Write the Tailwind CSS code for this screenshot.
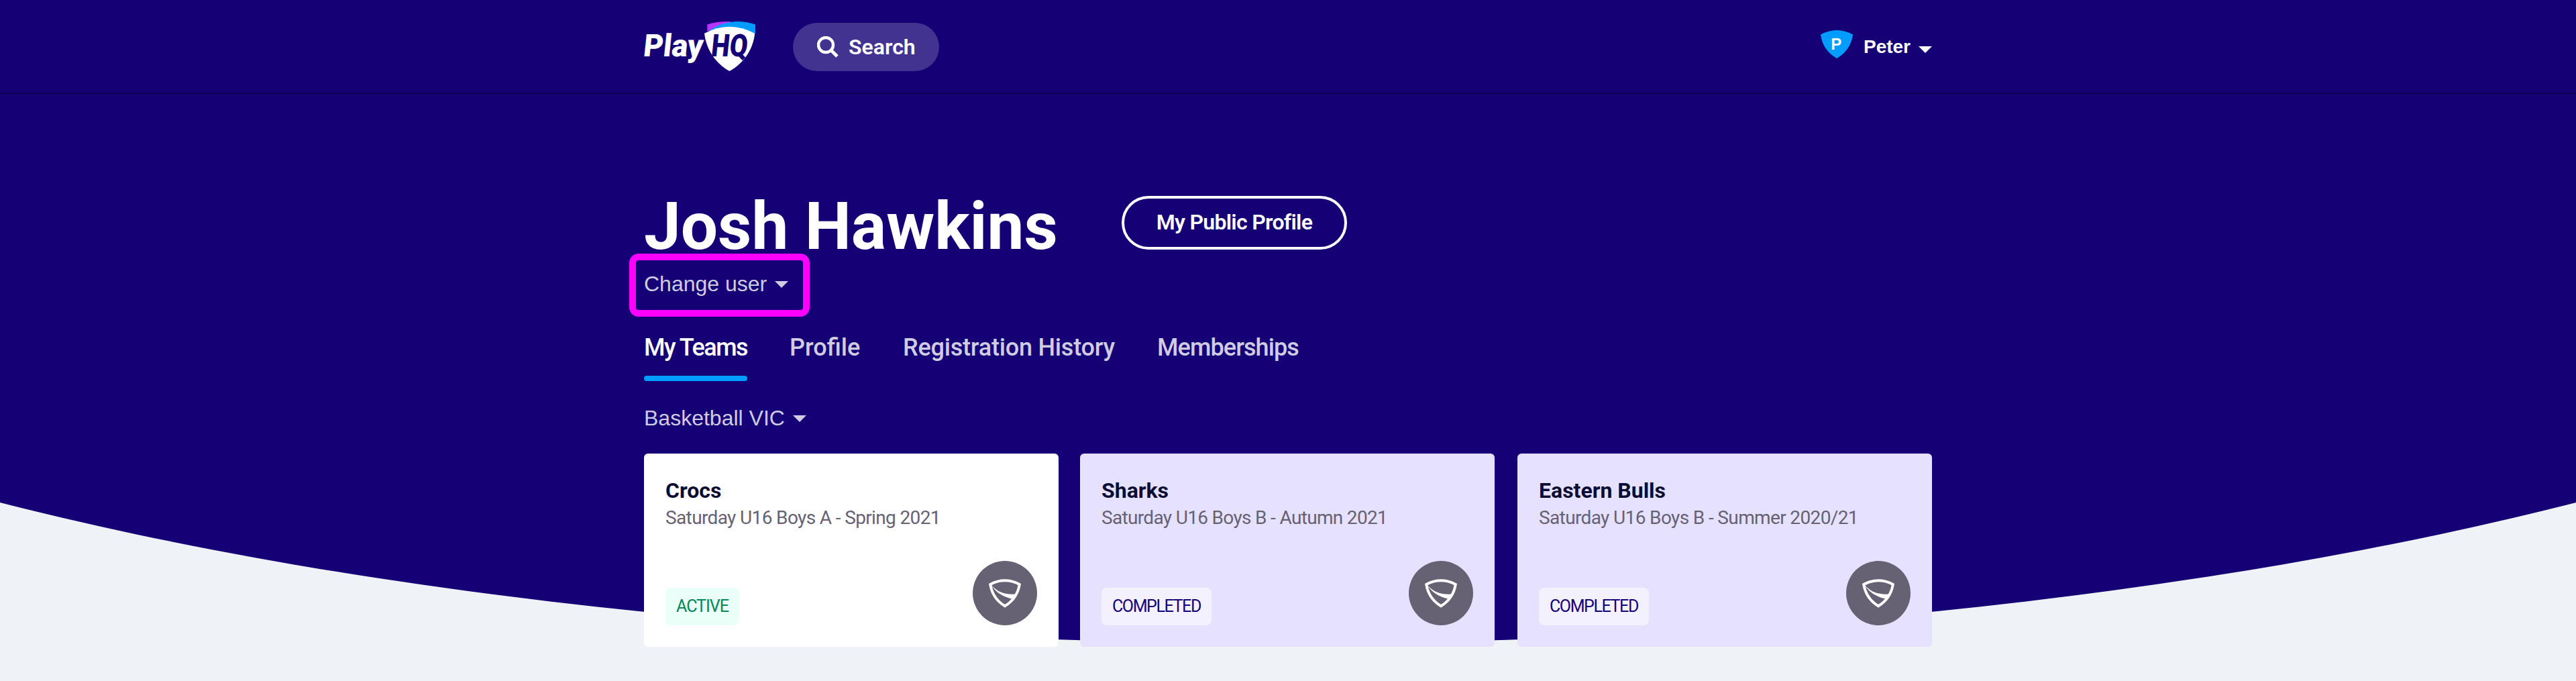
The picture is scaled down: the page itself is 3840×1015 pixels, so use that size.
<!DOCTYPE html>
<html lang="en">
<head>
    <meta charset="UTF-8">
    <meta name="viewport" content="width=device-width, initial-scale=1.0">
    <title>PlayHQ - My Teams</title>
    <script src="https://cdn.jsdelivr.net/npm/@tailwindcss/browser@4"></script>
</head>
<body class="bg-[#eff3f8] font-['Roboto',sans-serif] h-[1015px] overflow-hidden relative">
    <!-- Curved background -->
    <div class="absolute inset-0 overflow-hidden">
        <div class="h-[200px] bg-[#150076]"></div>
        <div class="absolute top-[-691px] -left-[960px] w-[5760px] h-[1650px] rounded-[50%] bg-[#150076]"></div>
    </div>

    <div class="relative">
        <!-- Header -->
        <header class="h-[140px] border-b-2 border-[#0e0052]">
            <div class="w-[1920px] mx-auto h-full flex items-start">
                <svg class="mt-7 w-[170px] h-[82px] overflow-visible" viewBox="960 28 170 82">
                    <path d="M1054.3 36.4Q1068 32 1089 32L1087 40L1054.3 46.8Z" fill="#b935ff"/>
                    <path d="M1057 46Q1076 32 1101 32Q1114 32.3 1126 36.6V49.7L1087 44Z" fill="#009dff"/>
                    <path d="M1050 49.7Q1087.4 29.6 1125.2 49.7C1122.5 74 1109 94 1087.4 106C1066 94 1053 74 1050 49.7Z" fill="#fff"/>
                    <g font-family="Roboto" font-weight="900" font-size="46.5">
                        <text transform="translate(960 83.7) skewX(-6)" x="-2" y="0" fill="#fff" textLength="89" lengthAdjust="spacingAndGlyphs">Play</text>
                        <text transform="translate(1060 83.7) skewX(-6)" x="-1" y="0" fill="#150076" textLength="54" lengthAdjust="spacingAndGlyphs">HQ</text>
                    </g>
                </svg>
                <button class="mt-[34px] ml-[52px] w-[218px] h-[72px] rounded-full bg-white/20 text-white flex items-center pl-9">
                    <svg class="w-8 h-8" viewBox="0 0 32 32" fill="none" stroke="#fff">
                        <circle cx="13" cy="13" r="11" stroke-width="4.4"/>
                        <path d="M20.5 20.5L30 30" stroke-width="5"/>
                    </svg>
                    <span class="ml-[15px] text-[32px] leading-[38px] font-semibold">Search</span>
                </button>
                <div class="ml-auto mt-[45px] flex items-start text-white">
                    <svg class="w-12 h-[42px]" viewBox="0 0 48 42">
                        <path d="M0 6.5Q24 -6.5 48 6.5C46 22 38 34 24 42C10 34 2 22 0 6.5Z" fill="#009dff"/>
                        <text x="15.3" y="28.8" font-family="Liberation Sans" font-weight="700" font-size="24" fill="#fff">P</text>
                    </svg>
                    <span class="ml-4 mt-[9px] text-[28px] leading-8 font-bold font-['Liberation_Sans',sans-serif]">Peter</span>
                    <svg class="ml-[12px] mt-6 w-5 h-[10px]" viewBox="0 0 20 10"><path d="M0 0H20L10 10Z" fill="#fff"/></svg>
                </div>
            </div>
        </header>

        <!-- Profile -->
        <main class="w-[1920px] mx-auto pt-[148px]">
            <div class="flex items-start h-[100px] text-white">
                <h1 class="w-[712px] text-[98px] leading-[100px] font-bold whitespace-nowrap">Josh Hawkins</h1>
                <button class="mt-1 w-[336px] h-20 rounded-full border-4 border-white text-[32px] leading-9 pb-0.5 font-semibold tracking-[-0.7px]">My Public Profile</button>
            </div>

            <div class="relative mt-[17px] flex items-center h-9 text-[#d0cce4] font-['Liberation_Sans',sans-serif]">
                <span class="text-[32px] leading-9">Change user</span>
                <svg class="ml-3 mt-0.5 w-5 h-[10px]" viewBox="0 0 20 10"><path d="M0 0H20L10 10Z" fill="currentColor"/></svg>
                <div class="absolute -left-[22px] -top-[27px] w-[269px] h-[94px] border-10 border-[#ff00ff] rounded-[14px]"></div>
            </div>

            <!-- Tabs -->
            <nav class="mt-[57px] flex text-[36px] leading-10 font-medium text-[#d0cce4] whitespace-nowrap h-[70px]">
                <div class="w-[217px] text-white">
                    <a class="block tracking-[-1.5px]">My Teams</a>
                    <div class="mt-[22px] w-[154px] h-2 rounded-full bg-[#009dff]"></div>
                </div>
                <a class="w-[169px]">Profile</a>
                <a class="w-[379px] tracking-[-0.2px]">Registration History</a>
                <a class="tracking-[-0.9px]">Memberships</a>
            </nav>

            <div class="mt-[37px] flex items-center h-9 text-[#d0cce4] font-['Liberation_Sans',sans-serif]">
                <span class="text-[32px] leading-9">Basketball VIC</span>
                <svg class="ml-3 mt-0.5 w-5 h-[10px]" viewBox="0 0 20 10"><path d="M0 0H20L10 10Z" fill="currentColor"/></svg>
            </div>

            <!-- Team cards -->
            <div class="mt-[35px] grid grid-cols-[650px_652px_618px]">
                <div class="w-[618px] h-72 rounded-md bg-white px-8 pt-[35px] pb-8 flex flex-col">
                    <h3 class="text-[32px] leading-10 font-bold text-[#0b0d35]">Crocs</h3>
                    <p class="mt-[3px] text-[28px] leading-9 tracking-[-0.63px] text-[#666273]">Saturday U16 Boys A - Spring 2021</p>
                    <div class="mt-auto flex items-end justify-between">
                        <span class="w-[110px] h-14 rounded-lg bg-[#e9fff7] text-[#00875d] text-[25px] leading-14 pl-4 tracking-[-1px]">ACTIVE</span>
                        <div class="w-24 h-24 rounded-full bg-[#666273] flex items-center justify-center">
                            <svg class="w-12 h-[43px]" viewBox="0 0 48 43">
                                <path d="M2.2 8Q24 -3.4 45.8 8C43.5 22 36 33 24 40.3C12 33 4.5 22 2.2 8Z" fill="none" stroke="#fff" stroke-width="4"/>
                                <path d="M4 9C13 20 25 23.5 41 22.5L36.5 30C22 27 10 20 4 9Z" fill="#fff"/>
                            </svg>
                        </div>
                    </div>
                </div>
                <div class="w-[618px] h-72 rounded-md bg-[#e6e1ff] px-8 pt-[35px] pb-8 flex flex-col">
                    <h3 class="text-[32px] leading-10 font-bold text-[#0b0d35]">Sharks</h3>
                    <p class="mt-[3px] text-[28px] leading-9 tracking-[-0.67px] text-[#666273]">Saturday U16 Boys B - Autumn 2021</p>
                    <div class="mt-auto flex items-end justify-between">
                        <span class="w-[164px] h-14 rounded-lg bg-[#f4f1ff] text-[#150076] text-[25px] leading-14 pl-4 tracking-[-1.4px]">COMPLETED</span>
                        <div class="w-24 h-24 rounded-full bg-[#666273] flex items-center justify-center">
                            <svg class="w-12 h-[43px]" viewBox="0 0 48 43">
                                <path d="M2.2 8Q24 -3.4 45.8 8C43.5 22 36 33 24 40.3C12 33 4.5 22 2.2 8Z" fill="none" stroke="#fff" stroke-width="4"/>
                                <path d="M4 9C13 20 25 23.5 41 22.5L36.5 30C22 27 10 20 4 9Z" fill="#fff"/>
                            </svg>
                        </div>
                    </div>
                </div>
                <div class="w-[618px] h-72 rounded-md bg-[#e6e1ff] px-8 pt-[35px] pb-8 flex flex-col">
                    <h3 class="text-[32px] leading-10 font-bold text-[#0b0d35]">Eastern Bulls</h3>
                    <p class="mt-[3px] text-[28px] leading-9 tracking-[-0.63px] text-[#666273]">Saturday U16 Boys B - Summer 2020/21</p>
                    <div class="mt-auto flex items-end justify-between">
                        <span class="w-[164px] h-14 rounded-lg bg-[#f4f1ff] text-[#150076] text-[25px] leading-14 pl-4 tracking-[-1.4px]">COMPLETED</span>
                        <div class="w-24 h-24 rounded-full bg-[#666273] flex items-center justify-center">
                            <svg class="w-12 h-[43px]" viewBox="0 0 48 43">
                                <path d="M2.2 8Q24 -3.4 45.8 8C43.5 22 36 33 24 40.3C12 33 4.5 22 2.2 8Z" fill="none" stroke="#fff" stroke-width="4"/>
                                <path d="M4 9C13 20 25 23.5 41 22.5L36.5 30C22 27 10 20 4 9Z" fill="#fff"/>
                            </svg>
                        </div>
                    </div>
                </div>
            </div>
        </main>
    </div>
</body>
</html>
